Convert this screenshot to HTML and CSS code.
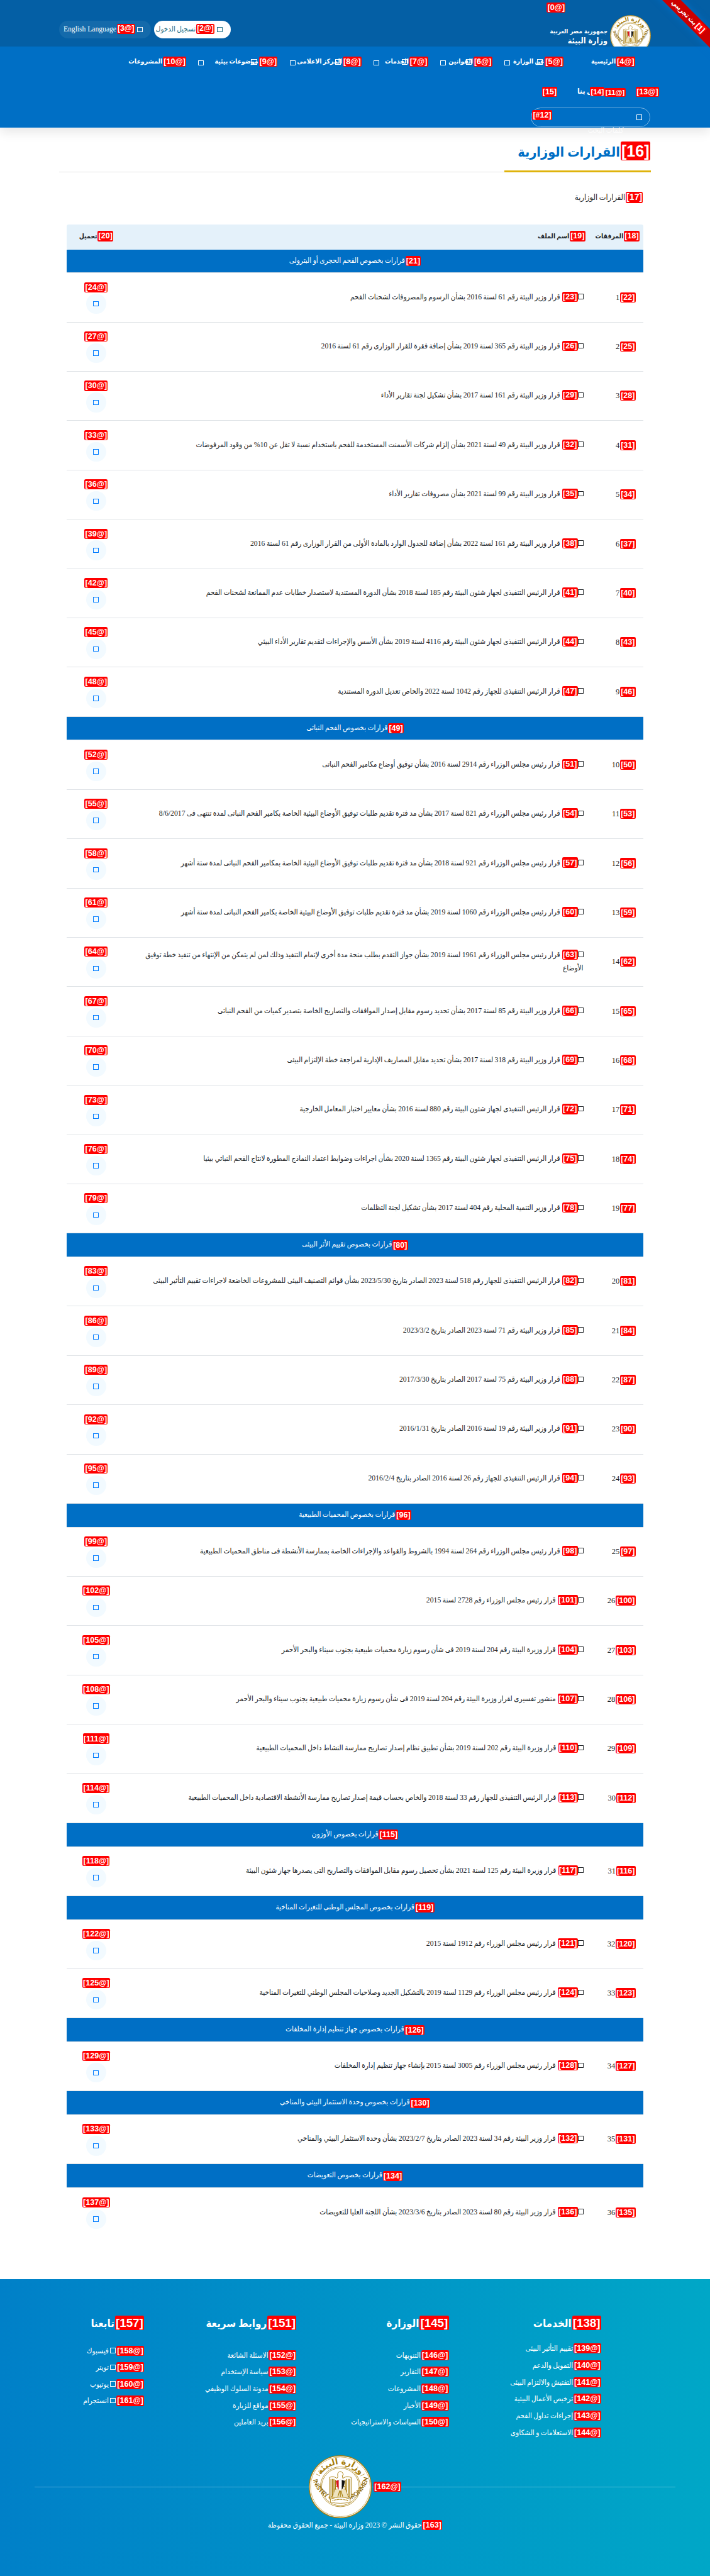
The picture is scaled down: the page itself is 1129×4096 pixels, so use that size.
FILE: index.html
```html
<!DOCTYPE html>
<html lang="ar" dir="rtl">
<head>
<meta charset="utf-8">
<title>القرارات الوزارية</title>
<link rel="stylesheet" href="styles.css">
</head>
<body>
<svg width="0" height="0" class="defs">
  <symbol id="emblem" viewBox="0 0 128 128">
    <circle cx="64" cy="64" r="63" fill="#fff" stroke="#a67c0a" stroke-width="1.8"/>
    <circle cx="64" cy="64" r="60.5" fill="none" stroke="#c2a04a" stroke-width="1"/>
    <circle cx="64" cy="64" r="40.5" fill="none" stroke="#a67c0a" stroke-width="1"/>
    <circle cx="64" cy="64" r="38" fill="none" stroke="#a67c0a" stroke-width="1"/>
    <path id="arcTop" d="M18 64a46 46 0 0 1 92 0" fill="none"/>
    <path id="arcBottom" d="M8.500 49.500A57 57 0 0 0 119.500 49.500" fill="none"/>
    <text class="emblem-ar" direction="rtl"><textPath href="#arcTop" startOffset="50%" text-anchor="middle">وزارة البيئة</textPath></text>
    <text class="emblem-en" direction="ltr"><textPath href="#arcBottom" startOffset="50%" text-anchor="middle" textLength="176">MINISTRY OF ENVIRONMENT</textPath></text>
    <path d="M15 38l8 4M113 38l-8 4" stroke="#a67c0a" stroke-width="1"/>
    <path d="M42 86V45q8-4 15 2l2-3q-1-5 0-8 5-6 10 0l1 4-2 1 1 6q7-6 17-2v41l-3 1-6-10-4-14H55l-4 14-6 10z" fill="#fff" stroke="#a67c0a" stroke-width="1.200"/>
    <path d="M45 48v37M48 48v34M51 48v28M54 50v20M83 48v37M80 48v34M77 48v28M74 50v20" stroke="#a67c0a" stroke-width="1.700"/>
    <path d="M53 70l11-4 11 4 5 15-16 6-16-6z" fill="#efe4c0" stroke="#c2a04a" stroke-width=".7"/>
    <path d="M59 84l5-16 5 16M64 68v18" fill="none" stroke="#a67c0a" stroke-width="1.500"/>
    <path d="M55 52l6-2v20q-5-6-6-18z" fill="#d8121c"/>
    <path d="M61 50q3-1 6 0v20l-3 2-3-2z" fill="#fff" stroke="#bbb" stroke-width=".4"/>
    <path d="M67 50l6 2q-1 12-6 18z" fill="#111"/>
    <path d="M44 89q20-8 40 0v6q-20 5-40 0z" fill="#fff" stroke="#a67c0a" stroke-width="1"/>
    <path d="M48 92q16-5 32 0" fill="none" stroke="#a67c0a" stroke-width="1.800" stroke-dasharray="2 1"/>
  </symbol>
</svg>

<header class="header">
  <div class="topbar">
    <b class="tag tag-0">[@0]</b>
    <div class="brand">
      <svg class="brand-emblem"><use href="#emblem"/></svg>
      <div class="brand-text"><span class="brand-a">جمهورية مصر العربية</span><span class="brand-b">وزارة البيئة</span></div>
    </div>
    <div class="account">
      <a class="pill pill-login"><i class="box"></i><b class="tag">[@2]</b><span>تسجيل الدخول</span></a>
      <a class="pill pill-lang"><i class="box"></i><b class="tag">[@3]</b><span>English Language</span></a>
    </div>
  </div>
  <nav class="nav">
    <div class="menu menu-first">
      <a class="item"><b class="tag">[@4]</b><span>الرئيسية</span></a>
      <a class="item"><b class="tag">[@5]</b><span>عن الوزارة</span><i class="box over"></i><i class="box"></i></a>
      <a class="item"><b class="tag">[@6]</b><span>القوانين</span><i class="box over"></i><i class="box"></i></a>
      <a class="item"><b class="tag">[@7]</b><span>الخدمات</span><i class="box over"></i><i class="box"></i></a>
      <a class="item"><b class="tag">[@8]</b><span>المركز الاعلامى</span><i class="box over"></i><i class="box"></i></a>
      <a class="item"><b class="tag">[@9]</b><span>موضوعات بيئية</span><i class="box over"></i><i class="box"></i></a>
      <a class="item"><b class="tag">[@10]</b><span>المشروعات</span></a>
    </div>
    <div class="menu menu-second">
      <b class="tag">[@13]</b>
      <a class="contact"><b class="tag tag-small">[@11]</b><span class="contact-label">اتصل بنا<b class="tag tag-14">[14]</b></span></a>
      <b class="tag">[15]</b>
    </div>
    <div class="search"><i class="box"></i><b class="tag tag-12">[#12]</b><span class="placeholder">كلمات البحث</span></div>
  </nav>
  <div class="ribbon"><b class="tag">[1]</b>بث تجريبي</div>
</header>

<main class="main">
  <h1 class="title"><span><b class="tag">[16]</b>القرارات الوزارية</span></h1>
  <p class="subtitle"><b class="tag">[17]</b>القرارات الوزارية</p>

  <div class="table">
    <div class="thead"><span><b class="tag">[18]</b>المرفقات</span><span class="th-name"><b class="tag">[19]</b>اسم الملف</span><span><b class="tag">[20]</b>تحميل</span></div>
    <div class="group"><b class="tag">[21]</b>قرارات بخصوص الفحم الحجرى أو البترولى</div>
    <div class="row"><div><b class="tag">[22]</b>1</div><div><i class="box"></i><b class="tag">[23]</b> قرار وزير البيئة رقم 61 لسنة 2016 بشأن الرسوم والمصروفات لشحنات الفحم</div><div><b class="tag">[@24]</b><a class="dl"><i class="box"></i></a></div></div>
    <div class="row"><div><b class="tag">[25]</b>2</div><div><i class="box"></i><b class="tag">[26]</b> قرار وزير البيئة رقم 365 لسنة 2019 بشأن إضافة فقرة للقرار الوزارى رقم 61 لسنة 2016</div><div><b class="tag">[@27]</b><a class="dl"><i class="box"></i></a></div></div>
    <div class="row"><div><b class="tag">[28]</b>3</div><div><i class="box"></i><b class="tag">[29]</b> قرار وزير البيئة رقم 161 لسنة 2017 بشأن تشكيل لجنة تقارير الأداء</div><div><b class="tag">[@30]</b><a class="dl"><i class="box"></i></a></div></div>
    <div class="row"><div><b class="tag">[31]</b>4</div><div><i class="box"></i><b class="tag">[32]</b> قرار وزير البيئة رقم 49 لسنة 2021 بشأن إلزام شركات الأسمنت المستخدمة للفحم باستخدام نسبة لا تقل عن 10% من وقود المرفوضات</div><div><b class="tag">[@33]</b><a class="dl"><i class="box"></i></a></div></div>
    <div class="row"><div><b class="tag">[34]</b>5</div><div><i class="box"></i><b class="tag">[35]</b> قرار وزير البيئة رقم 99 لسنة 2021 بشأن مصروفات تقارير الأداء</div><div><b class="tag">[@36]</b><a class="dl"><i class="box"></i></a></div></div>
    <div class="row"><div><b class="tag">[37]</b>6</div><div><i class="box"></i><b class="tag">[38]</b> قرار وزير البيئة رقم 161 لسنة 2022 بشأن إضافة للجدول الوارد بالمادة الأولى من القرار الوزارى رقم 61 لسنة 2016</div><div><b class="tag">[@39]</b><a class="dl"><i class="box"></i></a></div></div>
    <div class="row"><div><b class="tag">[40]</b>7</div><div><i class="box"></i><b class="tag">[41]</b> قرار الرئيس التنفيذى لجهاز شئون البيئة رقم 185 لسنة 2018 بشأن الدورة المستندية لاستصدار خطابات عدم الممانعة لشحنات الفحم</div><div><b class="tag">[@42]</b><a class="dl"><i class="box"></i></a></div></div>
    <div class="row"><div><b class="tag">[43]</b>8</div><div><i class="box"></i><b class="tag">[44]</b> قرار الرئيس التنفيذى لجهاز شئون البيئة رقم 4116 لسنة 2019 بشأن الأسس والإجراءات لتقديم تقارير الأداء البيئي</div><div><b class="tag">[@45]</b><a class="dl"><i class="box"></i></a></div></div>
    <div class="row"><div><b class="tag">[46]</b>9</div><div><i class="box"></i><b class="tag">[47]</b> قرار الرئيس التنفيذى للجهاز رقم 1042 لسنة 2022 والخاص تعديل الدورة المستندية</div><div><b class="tag">[@48]</b><a class="dl"><i class="box"></i></a></div></div>
    <div class="group"><b class="tag">[49]</b>قرارات بخصوص الفحم النباتى</div>
    <div class="row"><div><b class="tag">[50]</b>10</div><div><i class="box"></i><b class="tag">[51]</b> قرار رئيس مجلس الوزراء رقم 2914 لسنة 2016 بشأن توفيق أوضاع مكامير الفحم النباتى</div><div><b class="tag">[@52]</b><a class="dl"><i class="box"></i></a></div></div>
    <div class="row"><div><b class="tag">[53]</b>11</div><div><i class="box"></i><b class="tag">[54]</b> قرار رئيس مجلس الوزراء رقم 821 لسنة 2017 بشأن مد فترة تقديم طلبات توفيق الأوضاع البيئية الخاصة بكامير الفحم النباتى لمدة تنتهى فى 8/6/2017</div><div><b class="tag">[@55]</b><a class="dl"><i class="box"></i></a></div></div>
    <div class="row"><div><b class="tag">[56]</b>12</div><div><i class="box"></i><b class="tag">[57]</b> قرار رئيس مجلس الوزراء رقم 921 لسنة 2018 بشأن مد فترة تقديم طلبات توفيق الأوضاع البيئية الخاصة بمكامير الفحم النباتى لمدة ستة أشهر</div><div><b class="tag">[@58]</b><a class="dl"><i class="box"></i></a></div></div>
    <div class="row"><div><b class="tag">[59]</b>13</div><div><i class="box"></i><b class="tag">[60]</b> قرار رئيس مجلس الوزراء رقم 1060 لسنة 2019 بشأن مد فترة تقديم طلبات توفيق الأوضاع البيئية الخاصة بكامير الفحم النباتى لمدة ستة أشهر</div><div><b class="tag">[@61]</b><a class="dl"><i class="box"></i></a></div></div>
    <div class="row"><div><b class="tag">[62]</b>14</div><div><i class="box"></i><b class="tag">[63]</b> قرار رئيس مجلس الوزراء رقم 1961 لسنة 2019 بشأن جواز التقدم بطلب منحة مدة أخرى لإتمام التنفيذ وذلك لمن لم يتمكن من الإنتهاء من تنفيذ خطة توفيق<br>الأوضاع</div><div><b class="tag">[@64]</b><a class="dl"><i class="box"></i></a></div></div>
    <div class="row"><div><b class="tag">[65]</b>15</div><div><i class="box"></i><b class="tag">[66]</b> قرار وزير البيئة رقم 85 لسنة 2017 بشأن تحديد رسوم مقابل إصدار الموافقات والتصاريح الخاصة بتصدير كميات من الفحم النباتى</div><div><b class="tag">[@67]</b><a class="dl"><i class="box"></i></a></div></div>
    <div class="row"><div><b class="tag">[68]</b>16</div><div><i class="box"></i><b class="tag">[69]</b> قرار وزير البيئة رقم 318 لسنة 2017 بشأن تحديد مقابل المصاريف الإدارية لمراجعة خطة الإلتزام البيئى</div><div><b class="tag">[@70]</b><a class="dl"><i class="box"></i></a></div></div>
    <div class="row"><div><b class="tag">[71]</b>17</div><div><i class="box"></i><b class="tag">[72]</b> قرار الرئيس التنفيذى لجهاز شئون البيئة رقم 880 لسنة 2016 بشأن معايير اختبار المعامل الخارجية</div><div><b class="tag">[@73]</b><a class="dl"><i class="box"></i></a></div></div>
    <div class="row"><div><b class="tag">[74]</b>18</div><div><i class="box"></i><b class="tag">[75]</b> قرار الرئيس التنفيذى لجهاز شئون البيئة رقم 1365 لسنة 2020 بشأن اجراءات وضوابط اعتماد النماذج المطورة لانتاج الفحم النباتي بيئيا</div><div><b class="tag">[@76]</b><a class="dl"><i class="box"></i></a></div></div>
    <div class="row"><div><b class="tag">[77]</b>19</div><div><i class="box"></i><b class="tag">[78]</b> قرار وزير التنمية المحلية رقم 404 لسنة 2017 بشأن تشكيل لجنة التظلمات</div><div><b class="tag">[@79]</b><a class="dl"><i class="box"></i></a></div></div>
    <div class="group"><b class="tag">[80]</b>قرارات بخصوص تقييم الأثر البيئى</div>
    <div class="row"><div><b class="tag">[81]</b>20</div><div><i class="box"></i><b class="tag">[82]</b> قرار الرئيس التنفيذى للجهاز رقم 518 لسنة 2023 الصادر بتاريخ 2023/5/30 بشأن قوائم التصنيف البيئى للمشروعات الخاضعة لاجراءات تقييم التأثير البيئى</div><div><b class="tag">[@83]</b><a class="dl"><i class="box"></i></a></div></div>
    <div class="row"><div><b class="tag">[84]</b>21</div><div><i class="box"></i><b class="tag">[85]</b> قرار وزير البيئة رقم 71 لسنة 2023 الصادر بتاريخ 2023/3/2</div><div><b class="tag">[@86]</b><a class="dl"><i class="box"></i></a></div></div>
    <div class="row"><div><b class="tag">[87]</b>22</div><div><i class="box"></i><b class="tag">[88]</b> قرار وزير البيئة رقم 75 لسنة 2017 الصادر بتاريخ 2017/3/30</div><div><b class="tag">[@89]</b><a class="dl"><i class="box"></i></a></div></div>
    <div class="row"><div><b class="tag">[90]</b>23</div><div><i class="box"></i><b class="tag">[91]</b> قرار وزير البيئة رقم 19 لسنة 2016 الصادر بتاريخ 2016/1/31</div><div><b class="tag">[@92]</b><a class="dl"><i class="box"></i></a></div></div>
    <div class="row"><div><b class="tag">[93]</b>24</div><div><i class="box"></i><b class="tag">[94]</b> قرار الرئيس التنفيذى للجهاز رقم 26 لسنة 2016 الصادر بتاريخ 2016/2/4</div><div><b class="tag">[@95]</b><a class="dl"><i class="box"></i></a></div></div>
    <div class="group"><b class="tag">[96]</b>قرارات بخصوص المحميات الطبيعية</div>
    <div class="row"><div><b class="tag">[97]</b>25</div><div><i class="box"></i><b class="tag">[98]</b> قرار رئيس مجلس الوزراء رقم 264 لسنة 1994 بالشروط والقواعد والإجراءات الخاصة بممارسة الأنشطة فى مناطق المحميات الطبيعية</div><div><b class="tag">[@99]</b><a class="dl"><i class="box"></i></a></div></div>
    <div class="row"><div><b class="tag">[100]</b>26</div><div><i class="box"></i><b class="tag">[101]</b> قرار رئيس مجلس الوزراء رقم 2728 لسنة 2015</div><div><b class="tag">[@102]</b><a class="dl"><i class="box"></i></a></div></div>
    <div class="row"><div><b class="tag">[103]</b>27</div><div><i class="box"></i><b class="tag">[104]</b> قرار وزيرة البيئة رقم 204 لسنة 2019 فى شأن رسوم زيارة محميات طبيعية بجنوب سيناء والبحر الأحمر</div><div><b class="tag">[@105]</b><a class="dl"><i class="box"></i></a></div></div>
    <div class="row"><div><b class="tag">[106]</b>28</div><div><i class="box"></i><b class="tag">[107]</b> منشور تفسيرى لقرار وزيرة البيئة رقم 204 لسنة 2019 فى شأن رسوم زيارة محميات طبيعية بجنوب سيناء والبحر الأحمر</div><div><b class="tag">[@108]</b><a class="dl"><i class="box"></i></a></div></div>
    <div class="row"><div><b class="tag">[109]</b>29</div><div><i class="box"></i><b class="tag">[110]</b> قرار وزيرة البيئة رقم 202 لسنة 2019 بشأن تطبيق نظام إصدار تصاريح ممارسة النشاط داخل المحميات الطبيعية</div><div><b class="tag">[@111]</b><a class="dl"><i class="box"></i></a></div></div>
    <div class="row"><div><b class="tag">[112]</b>30</div><div><i class="box"></i><b class="tag">[113]</b> قرار الرئيس التنفيذى للجهاز رقم 33 لسنة 2018 والخاص بحساب قيمة إصدار تصاريح ممارسة الأنشطة الاقتصادية داخل المحميات الطبيعية</div><div><b class="tag">[@114]</b><a class="dl"><i class="box"></i></a></div></div>
    <div class="group"><b class="tag">[115]</b>قرارات بخصوص الأوزون</div>
    <div class="row"><div><b class="tag">[116]</b>31</div><div><i class="box"></i><b class="tag">[117]</b> قرار وزيرة البيئة رقم 125 لسنة 2021 بشأن تحصيل رسوم مقابل الموافقات والتصاريح التى يصدرها جهاز شئون البيئة</div><div><b class="tag">[@118]</b><a class="dl"><i class="box"></i></a></div></div>
    <div class="group"><b class="tag">[119]</b>قرارات بخصوص المجلس الوطني للتغيرات المناخية</div>
    <div class="row"><div><b class="tag">[120]</b>32</div><div><i class="box"></i><b class="tag">[121]</b> قرار رئيس مجلس الوزراء رقم 1912 لسنة 2015</div><div><b class="tag">[@122]</b><a class="dl"><i class="box"></i></a></div></div>
    <div class="row"><div><b class="tag">[123]</b>33</div><div><i class="box"></i><b class="tag">[124]</b> قرار رئيس مجلس الوزراء رقم 1129 لسنة 2019 بالتشكيل الجديد وصلاحيات المجلس الوطني للتغيرات المناخية</div><div><b class="tag">[@125]</b><a class="dl"><i class="box"></i></a></div></div>
    <div class="group"><b class="tag">[126]</b>قرارات بخصوص جهاز تنظيم إدارة المخلفات</div>
    <div class="row"><div><b class="tag">[127]</b>34</div><div><i class="box"></i><b class="tag">[128]</b> قرار رئيس مجلس الوزراء رقم 3005 لسنة 2015 بإنشاء جهاز تنظيم إدارة المخلفات</div><div><b class="tag">[@129]</b><a class="dl"><i class="box"></i></a></div></div>
    <div class="group"><b class="tag">[130]</b>قرارات بخصوص وحدة الاستثمار البيئي والمناخي</div>
    <div class="row"><div><b class="tag">[131]</b>35</div><div><i class="box"></i><b class="tag">[132]</b> قرار وزير البيئة رقم 34 لسنة 2023 الصادر بتاريخ 2023/2/7 بشأن وحدة الاستثمار البيئي والمناخي</div><div><b class="tag">[@133]</b><a class="dl"><i class="box"></i></a></div></div>
    <div class="group"><b class="tag">[134]</b>قرارات بخصوص التعويضات</div>
    <div class="row row-last"><div><b class="tag">[135]</b>36</div><div><i class="box"></i><b class="tag">[136]</b> قرار وزير البيئة رقم 80 لسنة 2023 الصادر بتاريخ 2023/3/6 بشأن اللجنة العليا للتعويضات</div><div><b class="tag">[@137]</b><a class="dl"><i class="box"></i></a></div></div>
  </div>
</main>

<footer class="footer">
  <div class="columns">
    <section class="col"><h2><b class="tag">[138]</b>الخدمات</h2>
      <ul class="links-a"><li><b class="tag">[@139]</b>تقييم التأثير البيئى</li><li><b class="tag">[@140]</b>التمويل والدعم</li><li><b class="tag">[@141]</b>التفتيش والالتزام البيئى</li><li><b class="tag">[@142]</b>ترخيص الأعمال البيئية</li><li><b class="tag">[@143]</b>إجراءات تداول الفحم</li><li><b class="tag">[@144]</b>الاستعلامات و الشكاوى</li></ul></section>
    <section class="col"><h2><b class="tag">[145]</b>الوزارة</h2>
      <ul class="links-b"><li><b class="tag">[@146]</b>التنويهات</li><li><b class="tag">[@147]</b>التقارير</li><li><b class="tag">[@148]</b>المشروعات</li><li><b class="tag">[@149]</b>الأخبار</li><li><b class="tag">[@150]</b>السياسات والاستراتيجيات</li></ul></section>
    <section class="col"><h2><b class="tag">[151]</b>روابط سريعة</h2>
      <ul class="links-b"><li><b class="tag">[@152]</b>الاسئلة الشائعة</li><li><b class="tag">[@153]</b>سياسة الإستخدام</li><li><b class="tag">[@154]</b>مدونة السلوك الوظيفي</li><li><b class="tag">[@155]</b>مواقع للزيارة</li><li><b class="tag">[@156]</b>بريد العاملين</li></ul></section>
    <section class="col"><h2><b class="tag">[157]</b>تابعنا</h2>
      <ul class="links-c"><li><b class="tag">[@158]</b><i class="box"></i> فيسبوك</li><li><b class="tag">[@159]</b><i class="box"></i> تويتر</li><li><b class="tag">[@160]</b><i class="box"></i> يوتيوب</li><li><b class="tag">[@161]</b><i class="box"></i> انستجرام</li></ul></section>
  </div>
  <div class="divider"><b class="tag">[@162]</b><svg class="footer-emblem"><use href="#emblem"/></svg></div>
  <p class="copyright"><b class="tag">[163]</b>حقوق النشر © 2023 وزارة البيئة - جميع الحقوق محفوظة</p>
</footer>
</body>
</html>
```
FILE: styles.css
```css
/* 1rem = 10 design units */
html { font-size: 7.84px; }
* { box-sizing: border-box; }
body {
  margin: 0;
  background: #fff;
  color: #212529;
  font-family: "Liberation Serif", "DejaVu Sans Condensed", "DejaVu Sans", serif;
  /* keeps the Arabic fallback in proportion to the serif digits */
  font-size-adjust: 0.459;
  font-size: 1.5rem;
  word-spacing: -0.06rem;
  line-height: 2.65rem;
  overflow-x: hidden;
}
h1, h2, p, ul { margin: 0; padding: 0; }
ul { list-style: none; }
.defs { position: absolute; }

.tag {
  display: inline-block;
  padding: 0.13rem 0.15rem;
  margin-left: 0.1rem;
  border-radius: 0.3rem;
  background: #f00;
  color: #fff;
  font-family: "Liberation Sans", Arial, sans-serif;
  font-size: var(--tag, 1.6rem);
  font-size-adjust: none;
  font-weight: bold;
  line-height: 1.12;
  white-space: nowrap;
}
.box {
  display: inline-block;
  flex: none;
  width: 1.15rem;
  height: 1.08rem;
  border: 1px solid currentColor;
}
.emblem-ar { font: bold 17px "DejaVu Sans", sans-serif; fill: #a67c0a; }
.emblem-en { font: bold 12.5px Lato, "Open Sans", sans-serif; fill: #8f6b0c; word-spacing: 0; }

/* header */
.header {
  position: relative;
  height: 25.87rem;
  background: #006fc5;
  color: #fff;
  border-bottom: 1px solid #1a7dcb;
  box-shadow: 0 1rem 2rem rgba(0, 0, 0, .09);
}
.topbar {
  position: relative;
  height: 9.4rem;
  padding: 0 12rem;
  display: flex;
  justify-content: space-between;
  background: #045fa5;
  overflow: hidden;
}
.tag-0 { position: absolute; top: 0.55rem; left: 110.9rem; margin: 0; }
.brand { display: flex; gap: 0.5rem; padding-top: 3.1rem; }
.brand-emblem { flex: none; width: 8.3rem; height: 8.3rem; }
.brand-text {
  display: flex;
  flex-direction: column;
  font-family: "DejaVu Sans Condensed", "DejaVu Sans", sans-serif;
  font-size-adjust: none;
  font-weight: bold;
  white-space: nowrap;
  word-spacing: 0;
  padding-top: 2.2rem;
}
.brand-a { font-size: 1.24rem; line-height: 2.1rem; }
.brand-b { font-size: 1.6rem; line-height: 1.8rem; }
.account { display: flex; gap: 0.65rem; padding-top: 4.2rem; }
.pill {
  display: flex;
  align-items: center;
  height: 3.6rem;
  padding: 0 1.65rem 0 0;
  border-radius: 1.8rem;
  font-size: 1.48rem;
  white-space: nowrap;
  line-height: 1;
}
.pill .box { margin-left: 0.45rem; }
.pill .tag { --tag: 1.55rem; margin-top: -0.2rem; }
.pill-login { width: 15.45rem; background: #fff; color: #1f6f86; }
.pill-lang { width: 18.65rem; background: #146aab; color: #fff; word-spacing: 0; }
.ribbon {
  position: absolute;
  top: 2.6rem;
  right: -6.1rem;
  width: 20rem;
  height: 2.65rem;
  padding-right: 1.4rem;
  background: #c00;
  box-shadow: 0 0 1.5rem #0070c8;
  transform: rotate(45deg);
  display: flex;
  justify-content: center;
  align-items: center;
  font-size: 1.4rem;
  font-weight: bold;
  line-height: 1;
}

.nav { padding: 1.7rem 12rem 0; }
.menu { display: flex; align-items: center; height: 2.8rem; white-space: nowrap; font-weight: bold; font-size: 1.34rem; }
.menu-first { display: grid; grid-template-columns: 14.51rem 14.47rem 13.02rem 13.5rem 17.01rem 18.55rem 12rem; padding-right: 3.2rem; }
.item { position: relative; display: flex; align-items: center; }
.item > .box { margin: 0.5rem auto 0 2.46rem; }
.item > .over { position: absolute; right: 4.2rem; top: 0.85rem; margin: 0; }
.menu-second { margin-top: 3.3rem; }
.menu-second > .tag { margin: 0 -1.65rem 0 0; }
.contact { display: flex; align-items: center; margin-right: 2.1rem; width: 10rem; }
.contact + .tag { margin-right: 3.8rem; }
.tag-small { --tag: 1.45rem; margin: 0.3rem 0 0; }
.contact-label { position: relative; font-size: 1.55rem; }
.tag-14 { --tag: 1.5rem; position: absolute; right: 0; top: 0.3rem; margin: 0; }
.search {
  position: relative;
  width: 24.2rem;
  height: 4rem;
  margin: 1.8rem 0.1rem 0 0;
  padding: 1.35rem 1.5rem;
  border: 1px solid rgba(255, 255, 255, .45);
  border-radius: 2rem;
  line-height: 1;
}
.search .box { display: block; width: 1.25rem; }
.tag-12 { position: absolute; left: 0.1rem; top: 0.35rem; margin: 0; }
.placeholder { position: absolute; right: 5.3rem; top: 3.9rem; color: rgba(255, 255, 255, .75); }

/* title */
.main { height: 436.33rem; padding: 2.53rem 12rem 0; }
.title { --tag: 3.2rem; height: 6.5rem; border-bottom: 1px solid #e2e2e2; color: #006fc5; font-size: 2.75rem; line-height: 1; }
.title span { display: inline-block; height: 6.5rem; padding: 0.3rem 0.15rem 0 0; border-bottom: 0.4rem solid #dfb30c; width: 29.7rem; white-space: nowrap; }
.subtitle { --tag: 1.8rem; padding: 3.9rem 1.6rem 0 0; font-size: 1.62rem; line-height: 2.7rem; }

/* table */
.table { margin: 4.05rem 1.5rem 0; }
.thead, .row { display: grid; grid-template-columns: 10.6rem 1fr 12rem; align-items: center; }
.thead { height: 5.05rem; background: #e4f1fa; border-radius: 0.4rem; font-weight: bold; font-size: 1.34rem; text-align: center; }
.thead .th-name { text-align: right; padding-right: 1.2rem; }
.group {
  height: 4.8rem;
  display: flex;
  align-items: center;
  justify-content: center;
  background: #006fc5;
  border-bottom: 0.2rem solid #dee2e6;
  color: #fff;
}
.row { height: 10rem; border-bottom: 0.2rem solid #dee2e6; }
.row > div { padding: 0 1.6rem; }
.row > div:first-child { font-size: 1.6rem; }
.row > div:nth-child(2) { white-space: nowrap; }
.row > div:nth-child(3) { display: flex; flex-direction: column; align-items: center; gap: 0.35rem; padding-top: 0.2rem; }
.row > div:nth-child(3) .tag { margin: 0; }
.row-last { border-bottom: 0; }
.dl {
  display: flex;
  align-items: center;
  justify-content: center;
  width: 4rem;
  height: 4rem;
  border-radius: 50%;
  background: #f2faff;
  color: #007bff;
}

/* footer */
.footer { height: 60.2rem; padding-top: 7.2rem; background: linear-gradient(90deg, #0080c8, #00a7c7); color: #fff; }
.columns { display: flex; height: 28.6rem; padding-right: 22.1rem; white-space: nowrap; }
.col { width: 30.9rem; flex: none; }
.col h2 { --tag: 2.4rem; font-size: 2.15rem; line-height: 3.8rem; }
.col li { height: 3.4rem; line-height: 3.4rem; }
.links-a { padding-top: 1.6rem; }
.links-b { padding-top: 2.9rem; }
.links-c { padding-top: 2rem; }
.divider { margin: 0 7rem; height: 12.8rem; background: linear-gradient(rgba(255, 255, 255, .3), rgba(255, 255, 255, .3)) center / 100% 1px no-repeat; display: flex; align-items: center; justify-content: center; gap: 0.25rem; }
.footer-emblem { width: 12.8rem; height: 12.8rem; }
.copyright { text-align: center; padding-top: 0.2rem; }
```
